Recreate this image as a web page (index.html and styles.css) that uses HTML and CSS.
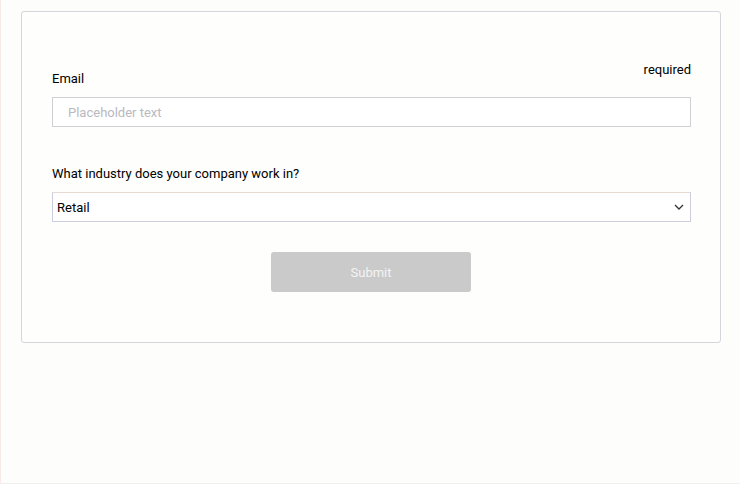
FILE: index.html
```html
<!DOCTYPE html>
<html>
<head>
<meta charset="utf-8">
<link rel="stylesheet" href="styles.css">
</head>
<body>
<div class="page">
  <form class="card">
    <div class="label-row">
      <label class="label email-label" for="email">Email</label>
      <span class="required">required</span>
    </div>
    <input id="email" class="field" type="text" placeholder="Placeholder text">
    <label class="label question" for="industry">What industry does your company work in?</label>
    <div class="select">
      <span class="select-value">Retail</span>
      <svg class="chevron" width="10" height="6" viewBox="0 0 10 6"><path d="M1 1l4 4 4-4" fill="none" stroke="#333" stroke-width="1.3"/></svg>
    </div>
    <div class="actions">
      <button class="submit" type="button">Submit</button>
    </div>
  </form>
</div>
</body>
</html>
```
FILE: styles.css
```css
html, body {
  margin: 0;
  padding: 0;
  background: #fdfdfb;
}
.page {
  box-sizing: border-box;
  width: 740px;
  height: 484px;
  padding: 11px 20px 0 21px;
  border-left: 1px solid #f6e9e6;
  border-bottom: 1px solid #efefeb;
  font-family: Roboto, "Liberation Sans", sans-serif;
  font-size: 13px;
  color: #000;
}
.card {
  box-sizing: border-box;
  width: 700px;
  height: 332px;
  margin-left: -1px;
  border: 1px solid #d5d5dc;
  border-radius: 3px;
  padding: 49px 29px 0 30px;
  background: #fefefc;
}
.label-row {
  display: flex;
  justify-content: space-between;
  align-items: flex-start;
}
.label {
  display: block;
  line-height: 16px;
}
.email-label {
  margin-top: 10px;
}
.required {
  line-height: 16px;
  margin-top: 1px;
}
.field {
  display: block;
  box-sizing: border-box;
  width: 100%;
  height: 30px;
  margin-top: 10px;
  border: 1px solid #cfcfd4;
  border-radius: 0;
  padding: 0 15px;
  font-family: inherit;
  font-size: 13px;
  background: #fff;
  outline: none;
}
.field::placeholder {
  color: #b9b9c0;
}
.question {
  margin-top: 39px;
}
.select {
  box-sizing: border-box;
  height: 30px;
  margin-top: 10px;
  border: 1px solid #cdcde0;
  border-top-color: #e5d9d2;
  background: #fff;
  display: flex;
  align-items: center;
  justify-content: space-between;
  padding: 0 4px 0 4px;
}
.select-value {
  color: #000;
}
.chevron {
  margin-right: 2px;
}
.actions {
  display: flex;
  justify-content: center;
  margin-top: 30px;
}
.submit {
  width: 200px;
  height: 40px;
  margin-right: 1px;
  border: none;
  border-radius: 3px;
  background: #cacaca;
  color: #f4f4f4;
  font-family: inherit;
  font-size: 13px;
}
```
